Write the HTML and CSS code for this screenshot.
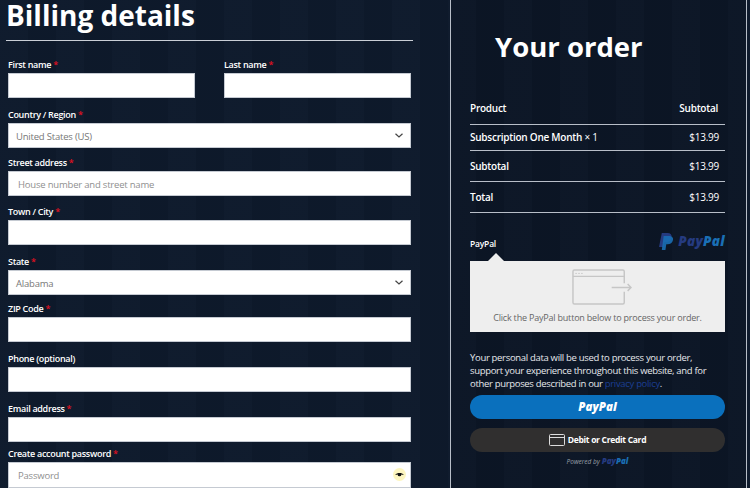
FILE: index.html
```html
<!DOCTYPE html>
<html lang="en">
<head>
    <meta charset="UTF-8">
    <meta name="viewport" content="width=device-width, initial-scale=1.0">
    <title>Checkout</title>
    <link rel="stylesheet" href="styles.css">
</head>
<body>
    <div class="checkout">
        <form class="billing">
            <h2 class="billing-title">Billing details</h2>
            <div class="name-row">
                <div class="field">
                    <label>First name <span class="req">*</span></label>
                    <div class="input"></div>
                </div>
                <div class="field">
                    <label>Last name <span class="req">*</span></label>
                    <div class="input"></div>
                </div>
            </div>
            <div class="field gap-6">
                <label>Country / Region <span class="req">*</span></label>
                <div class="input select">United States (US)
                    <svg class="chevron" width="8" height="5" viewBox="0 0 8 5"><path d="M.5.7L4 4 7.500.7" fill="none" stroke="#444" stroke-width="1.2"/></svg>
                </div>
            </div>
            <div class="field">
                <label>Street address <span class="req">*</span></label>
                <div class="input placeholder">House number and street name</div>
            </div>
            <div class="field gap-8">
                <label>Town / City <span class="req">*</span></label>
                <div class="input"></div>
            </div>
            <div class="field gap-5">
                <label>State <span class="req">*</span></label>
                <div class="input select">Alabama
                    <svg class="chevron" width="8" height="5" viewBox="0 0 8 5"><path d="M.5.7L4 4 7.500.7" fill="none" stroke="#444" stroke-width="1.2"/></svg>
                </div>
            </div>
            <div class="field gap-8">
                <label>ZIP Code <span class="req">*</span></label>
                <div class="input"></div>
            </div>
            <div class="field gap-8">
                <label>Phone (optional)</label>
                <div class="input"></div>
            </div>
            <div class="field gap-3">
                <label>Email address <span class="req">*</span></label>
                <div class="input"></div>
            </div>
            <div class="field">
                <label>Create account password <span class="req">*</span></label>
                <div class="input placeholder password">Password
                    <span class="eye">
                        <svg width="10" height="7" viewBox="0 0 10 7"><path d="M0 3.500C2 .5 8 .5 10 3.500 9 3 8 2.800 7.200 2.800A2.200 2.200 0 1 1 2.800 2.800C2 2.800 1 3 0 3.500z" fill="#111"/></svg>
                    </span>
                </div>
            </div>
        </form>

        <aside class="order">
            <h2 class="order-title">Your order</h2>
            <table class="order-table">
                <tr class="head"><th>Product</th><th class="sub-head">Subtotal</th></tr>
                <tr class="item"><td>Subscription One Month <span class="qty">× 1</span></td><td class="price">$13.99</td></tr>
                <tr><td>Subtotal</td><td class="price">$13.99</td></tr>
                <tr><td>Total</td><td class="price">$13.99</td></tr>
            </table>

            <div class="method">
                <span class="method-name">PayPal</span>
                <span class="pp-logo">
                    <svg width="14" height="17" viewBox="0 0 15 18"><path d="M3 0h6c3.500 0 5 2 4.500 4.800C13 8 10.500 9.800 7.500 9.800H5.500L4.600 15H0z" fill="#253b80"/><path d="M5 3h6c3 0 4.500 1.800 4 4.400-.5 3-2.900 4.600-5.700 4.600H7.800L6.900 18H3z" fill="#1a6fb5" opacity=".9"/></svg>
                    <span class="pp-word"><i class="pay">Pay</i><i class="pal">Pal</i></span>
                </span>
            </div>
            <div class="notch"></div>
            <div class="redirect">
                <svg class="window" width="60" height="36" viewBox="0 0 62 36" fill="none" stroke="#c6c6c6" stroke-width="1.500">
                    <path d="M54 14V2a1.500 1.500 0 0 0-1.500-1.500h-50A1.500 1.500 0 0 0 1 2v32a1.500 1.500 0 0 0 1.500 1.500h50A1.500 1.500 0 0 0 54 34V23"/>
                    <path d="M1 7H54"/>
                    <path d="M3.500 4h1.500M6.500 4h1.500M9.500 4h1.500" stroke-width="1"/>
                    <path d="M41 18.500h20M57.500 15l3.500 3.500-3.500 3.500"/>
                </svg>
                <p>Click the PayPal button below to process your order.</p>
            </div>

            <p class="privacy">Your personal data will be used to process your order, support your experience throughout this website, and for other purposes described in our <a href="#">privacy policy</a>.</p>

            <button type="button" class="pay-btn"><i>PayPal</i></button>
            <button type="button" class="card-btn">
                <svg width="16" height="12" viewBox="0 0 16 12" fill="none" stroke="#ddd" stroke-width="1"><rect x=".5" y=".5" width="15" height="11" rx="1"/><path d="M.5 3.500h15"/></svg>
                Debit or Credit Card
            </button>
            <div class="powered">Powered by <span class="powered-word"><i class="pay">Pay</i><i class="pal">Pal</i></span></div>
        </aside>
    </div>
</body>
</html>
```

FILE: styles.css
```css
* {
    box-sizing: border-box;
}

html, body {
    height: 488px;
    overflow: hidden;
}

body {
    margin: 0;
    font-family: "Open Sans", "Noto Sans", sans-serif;
    color: #fff;
    background-color: #0e1a2c;
    background-image: repeating-linear-gradient(90deg, rgba(255, 255, 255, 0.006) 0 28px, rgba(0, 0, 0, 0.04) 28px 56px);
}

.checkout {
    display: flex;
    align-items: flex-start;
}

/* left column */
.billing {
    width: 450px;
    padding: 0 39px 0 8px;
}

.billing-title {
    margin: 0 -2px 15px;
    padding: 0 0 6px;
    height: 41px;
    font-size: 28px;
    line-height: 30px;
    font-weight: 700;
    border-bottom: 1px solid #c9ced6;
}

.name-row {
    display: grid;
    grid-template-columns: 187px 187px;
    column-gap: 29px;
    margin-bottom: 8px;
}

.field {
    margin-bottom: 7px;
}

.name-row .field {
    margin-bottom: 0;
}

.field.gap-3 {
    margin-bottom: 3px;
}

.field.gap-5 {
    margin-bottom: 5px;
}

.field.gap-6 {
    margin-bottom: 6px;
}

.field.gap-8 {
    margin-bottom: 8px;
}

.field label {
    display: block;
    height: 17px;
    font-size: 9px;
    letter-spacing: -0.3px;
    line-height: 17px;
    font-weight: 600;
}

.req {
    color: #e01020;
}

.input {
    position: relative;
    display: flex;
    align-items: center;
    height: 25px;
    padding: 1px 7px 0;
    font-size: 9.500px;
    letter-spacing: -0.2px;
    color: #777;
    background: #fff;
    border: 1px solid #c5cad2;
}

.placeholder {
    padding-left: 9px;
    color: #8f8f8f;
}

.password {
    height: 26px;
}

.chevron {
    position: absolute;
    right: 7px;
    top: 9px;
}

.eye {
    position: absolute;
    right: 4px;
    top: 5px;
    display: flex;
    align-items: center;
    justify-content: center;
    width: 13px;
    height: 13px;
    background: #fdf6c0;
    border-radius: 50%;
}

.eye svg {
    width: 9px;
    height: 6px;
}

/* right column */
.order {
    width: 297px;
    height: 488px;
    padding: 0 19px;
    background: rgba(0, 0, 0, 0.12);
    border-left: 1px solid #b8bec8;
    border-right: 1px solid #b8bec8;
}

.order-title {
    margin: 0;
    padding: 28px 0 0 25px;
    height: 91px;
    font-size: 27.500px;
    line-height: 38px;
    font-weight: 700;
}

.order-table {
    width: 255px;
    border-collapse: collapse;
    font-size: 10px;
    letter-spacing: -0.25px;
}

.order-table th, .order-table td {
    padding: 0;
    text-align: left;
    font-weight: 600;
    border-bottom: 1px solid #b8bec8;
    height: 31px;
}

.order-table .head th {
    height: 33px;
    padding-top: 1px;
}

.order-table .item td {
    height: 26px;
}

.order-table .sub-head {
    padding-right: 7px;
    text-align: right;
}

.order-table .price {
    padding-right: 6px;
    text-align: right;
    font-weight: 400;
}

.qty {
    font-weight: 400;
}

.method {
    display: flex;
    justify-content: space-between;
    align-items: center;
    width: 255px;
    margin-top: 17px;
    height: 23px;
}

.method-name {
    padding-top: 5px;
    font-size: 8.500px;
    letter-spacing: -0.2px;
    font-weight: 600;
}

.pp-logo {
    display: flex;
    align-items: center;
    gap: 5px;
}

.pp-word {
    font-size: 13.500px;
    letter-spacing: 0.3px;
}

.pay {
    color: #253b80;
    font-weight: 800;
}

.pal {
    color: #1a6fb5;
    font-weight: 800;
}

.notch {
    width: 0;
    height: 0;
    margin-left: 18px;
    border-left: 8px solid transparent;
    border-right: 8px solid transparent;
    border-bottom: 8px solid #eee;
}

.redirect {
    display: flex;
    flex-direction: column;
    align-items: center;
    width: 255px;
    height: 71px;
    padding-top: 8px;
    background: #eeeeee;
}

.window {
    flex: none;
    margin-left: 9px;
}

.redirect p {
    margin: 7px 0 0;
    font-size: 9px;
    letter-spacing: -0.2px;
    line-height: 12px;
    color: #666;
}

.privacy {
    margin: 19px 0 0;
    width: 245px;
    font-size: 9.500px;
    letter-spacing: -0.32px;
    line-height: 13px;
    color: #e6e8ec;
}

.privacy a {
    color: #1c3f94;
    text-decoration: none;
}

.pay-btn, .card-btn {
    display: flex;
    align-items: center;
    justify-content: center;
    width: 255px;
    height: 24px;
    padding: 0;
    border: none;
    border-radius: 12px;
    font-family: inherit;
    color: #fff;
}

.pay-btn {
    margin-top: 5px;
    background: #0a70bd;
    font-size: 11.500px;
    font-weight: 800;
}

.card-btn {
    gap: 3px;
    margin-top: 9px;
    background: #302f2f;
    font-size: 8.500px;
    letter-spacing: -0.3px;
    font-weight: 700;
}

.powered {
    display: flex;
    justify-content: center;
    align-items: baseline;
    gap: 2px;
    width: 255px;
    margin-top: 3px;
    font-size: 6.500px;
    font-style: italic;
    color: #9aa0a8;
}

.powered-word {
    font-size: 8px;
}
```
